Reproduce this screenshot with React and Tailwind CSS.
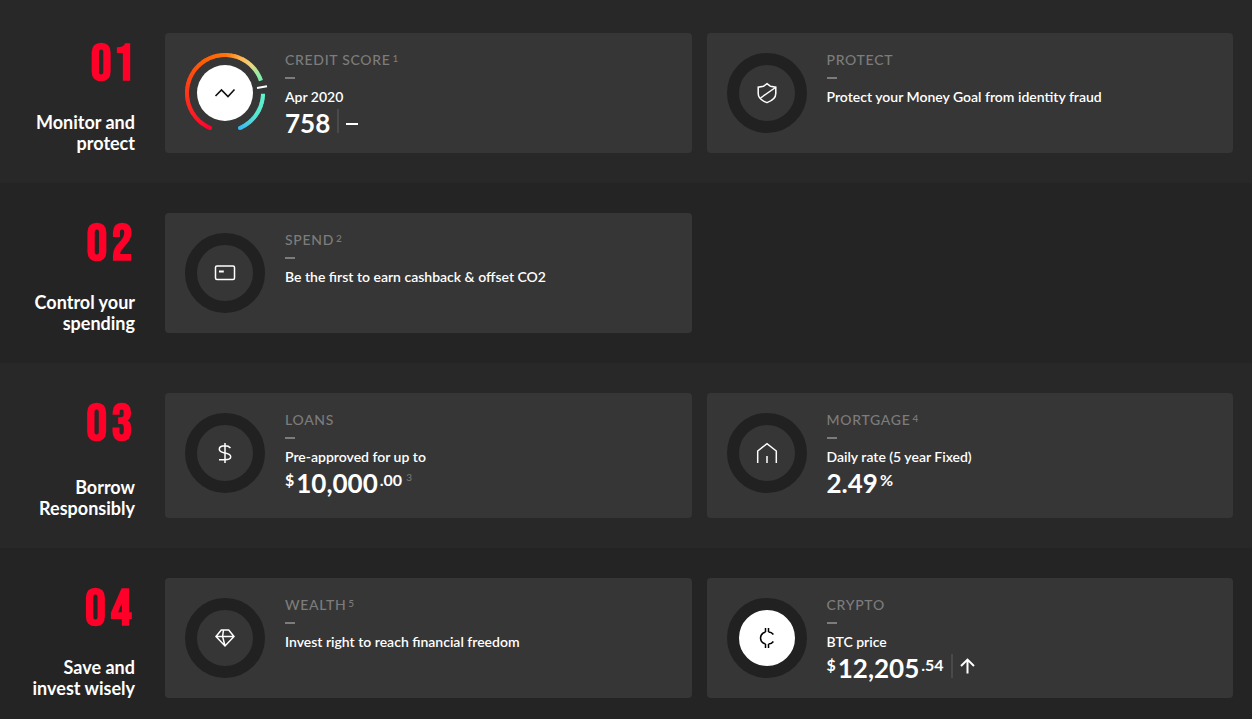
import React from 'react'

const gaugeColors = [
  [113, [255, 4, 46]],
  [180, [255, 54, 26]],
  [240, [255, 98, 4]],
  [272, [255, 116, 10]],
  [295, [255, 184, 84]],
  [312, [244, 212, 128]],
  [328, [160, 236, 160]],
  [341, [120, 238, 176]],
  [361, [98, 244, 204]],
  [395, [88, 232, 208]],
  [427, [60, 184, 242]],
]

const colorAt = (angle) => {
  let i = 1
  while (i < gaugeColors.length - 1 && gaugeColors[i][0] < angle) i++
  const [a0, c0] = gaugeColors[i - 1]
  const [a1, c1] = gaugeColors[i]
  const t = Math.min(1, Math.max(0, (angle - a0) / (a1 - a0)))
  return `rgb(${c0.map((c, k) => Math.round(c + (c1[k] - c) * t)).join(',')})`
}

const point = (angle) => {
  const rad = (angle * Math.PI) / 180
  return [(40 + 38 * Math.cos(rad)).toFixed(2), (40 + 38 * Math.sin(rad)).toFixed(2)]
}

// one small arc for every 2 degrees
const arcs = (from, to) => {
  const list = []
  for (let a = from; a < to; a += 2) {
    const [x0, y0] = point(a)
    const [x1, y1] = point(Math.min(to, a + 3))
    list.push(<path key={a} d={`M${x0} ${y0}A38 38 0 0 1 ${x1} ${y1}`} stroke={colorAt(a + 1)} />)
  }
  return list
}

const ScoreGauge = () => {
  const [sx, sy] = point(113)
  const [ex, ey] = point(427)
  return (
    <svg className='h-20 w-20 overflow-visible' viewBox='0 0 80 80' fill='none' strokeWidth='4'>
      {arcs(113, 341)}
      {arcs(361, 427)}
      <circle cx={sx} cy={sy} r='2' fill={colorAt(113)} />
      <circle cx={ex} cy={ey} r='2' fill={colorAt(427)} />
      <path d='M72 35L82 33.2' stroke='#fff' strokeWidth='2' />
      <circle cx='40' cy='40' r='28' fill='#fff' />
      <path d='M30.5 43L36.5 37L43 43.5L49.5 36.5' stroke='#111' strokeWidth='1.6' />
    </svg>
  )
}

const Ring = ({ filled, children }) => (
  <div className={`flex h-20 w-20 items-center justify-center rounded-full border-12 border-[#212121] ${filled ? 'bg-white text-black' : 'text-white'}`}>
    <svg className='h-6 w-6' viewBox='0 0 24 24' fill='none' stroke='currentColor' strokeWidth='1.5'>
      {children}
    </svg>
  </div>
)

const icons = {
  score: <ScoreGauge />,
  shield: (
    <Ring>
      <path d='M12 2.7L15.5 5.3L20.8 6.2V12.5C20.8 17 16.5 20 12 21.6C7.5 20 3.2 17 3.2 12.5V6.2L8.5 5.3Z' />
      <path d='M5.5 17L20.5 6.5' />
    </Ring>
  ),
  card: (
    <Ring>
      <rect x='2.5' y='5' width='19' height='13.5' rx='1.5' />
      <path d='M6 10.5H10.8' strokeWidth='2' />
    </Ring>
  ),
  dollar: (
    <Ring>
      <path d='M12 2V22M17.5 7C16 5.3 14 4.8 12 4.8C8.5 4.8 6.3 6 6.3 8.2C6.3 10.5 8.5 11.2 12 12C15.5 12.6 17.7 13.5 17.7 15.8C17.7 18 15.5 18.8 12 18.8H6' />
    </Ring>
  ),
  house: (
    <Ring>
      <path d='M2.7 22V10L12 2.7L21.3 10V22M12 15V22' />
    </Ring>
  ),
  diamond: (
    <Ring>
      <path d='M8.3 4H15.7L21 10.5L12 20L3 10.5ZM3 10.5H21M12 20L9.6 10.5L10.5 4' />
    </Ring>
  ),
  coin: (
    <Ring filled>
      <path d='M10.5 2V6M13.5 2V6M10.5 18V22M13.5 18V22M10.5 6C7.3 7 5.5 9 5.5 12C5.5 15 7.3 17 10.5 18M13.5 6C15.5 6 17.3 7 18.4 8.5M13.5 18C15.5 18 17.3 17 18.4 15.5' />
    </Ring>
  ),
}

const sections = [
  {
    number: '01',
    title: ['Monitor and', 'protect'],
    cards: [
      { icon: 'score', label: 'Credit score', note: '1', text: 'Apr 2020', value: '758', trend: 'flat' },
      { icon: 'shield', label: 'Protect', text: 'Protect your Money Goal from identity fraud' },
    ],
  },
  {
    number: '02',
    title: ['Control your', 'spending'],
    cards: [{ icon: 'card', label: 'Spend', note: '2', text: 'Be the first to earn cashback & offset CO2' }],
  },
  {
    number: '03',
    title: ['Borrow', 'Responsibly'],
    cards: [
      { icon: 'dollar', label: 'Loans', text: 'Pre-approved for up to', prefix: '$', value: '10,000', suffix: '.00', valueNote: '3' },
      { icon: 'house', label: 'Mortgage', note: '4', text: 'Daily rate (5 year Fixed)', value: '2.49', suffix: '%' },
    ],
  },
  {
    number: '04',
    title: ['Save and', 'invest wisely'],
    cards: [
      { icon: 'diamond', label: 'Wealth', note: '5', text: 'Invest right to reach financial freedom' },
      { icon: 'coin', label: 'Crypto', text: 'BTC price', prefix: '$', value: '12,205', suffix: '.54', trend: 'up' },
    ],
  },
]

const Trend = ({ direction }) => (
  <div className='ml-[7px] flex h-6 items-center border-l-2 border-[#4a4a4a] pl-[7px]'>
    <svg className='h-4 w-4' viewBox='0 0 16 16' fill='none' stroke='#fff' strokeWidth='2'>
      {direction === 'up' ? <path d='M7.5 15.5V1.5M1 8L7.5 1.6L14 8' /> : <path d='M0 11H12' />}
    </svg>
  </div>
)

const Value = ({ card }) => (
  <div className={`mt-0.5 flex h-7 items-start font-bold text-white ${card.valueNote ? 'mb-[5px]' : ''}`}>
    {card.prefix && <span className='mr-0.5 text-base leading-[22px]'>{card.prefix}</span>}
    <span className='text-[26px] leading-7'>{card.value}</span>
    {card.suffix && <span className='ml-0.5 text-base leading-[22px]'>{card.suffix}</span>}
    {card.valueNote && <span className='ml-1 text-[10px] leading-4 font-normal text-[#7c7c7c]'>{card.valueNote}</span>}
    {card.trend && <Trend direction={card.trend} />}
  </div>
)

const Card = ({ card }) => (
  <article className='flex min-h-[120px] gap-5 rounded bg-[#363636] px-5 pt-5 pb-4'>
    <div className='shrink-0'>{icons[card.icon]}</div>
    <div className='min-w-0'>
      <h3 className='flex items-start text-sm leading-[14px] font-medium tracking-wider text-[#7c7c7c] uppercase'>
        {card.label}
        {card.note && <span className='ml-0.5 text-[10px] leading-[10px]'>{card.note}</span>}
      </h3>
      <div className='mt-2.5 h-0.5 w-2.5 bg-[#7c7c7c]'></div>
      <p className='mt-2 text-sm leading-5 font-semibold text-white'>{card.text}</p>
      {card.value && <Value card={card} />}
    </div>
  </article>
)

const App = () => {
  return (
    <main className="flex min-h-screen flex-col bg-[#282828] pt-[3px] font-['Proxima_Nova','Lato','Open_Sans',sans-serif]">
      {sections.map((section) => (
        <section key={section.number} className='flex gap-[30px] pt-[30px] pr-[19px] pb-[30px] last:pb-[21px] odd:bg-[#282828] even:bg-[#242424]'>
          <header className='-mb-px flex w-[135px] shrink-0 flex-col justify-between text-right'>
            <span className="-mr-0.5 text-[52px] leading-[64px] font-bold tracking-widest text-[#ff0028] proportional-nums font-['Bebas_Neue','Oswald','Liberation_Sans',sans-serif]">{section.number}</span>
            <h2 className='text-lg leading-[21px] font-bold text-white'>
              {section.title[0]}
              <br />
              {section.title[1]}
            </h2>
          </header>
          <div className='grid flex-1 grid-cols-2 gap-[15px]'>
            {section.cards.map((card) => (
              <Card key={card.label} card={card} />
            ))}
          </div>
        </section>
      ))}
    </main>
  )
}

export default App
